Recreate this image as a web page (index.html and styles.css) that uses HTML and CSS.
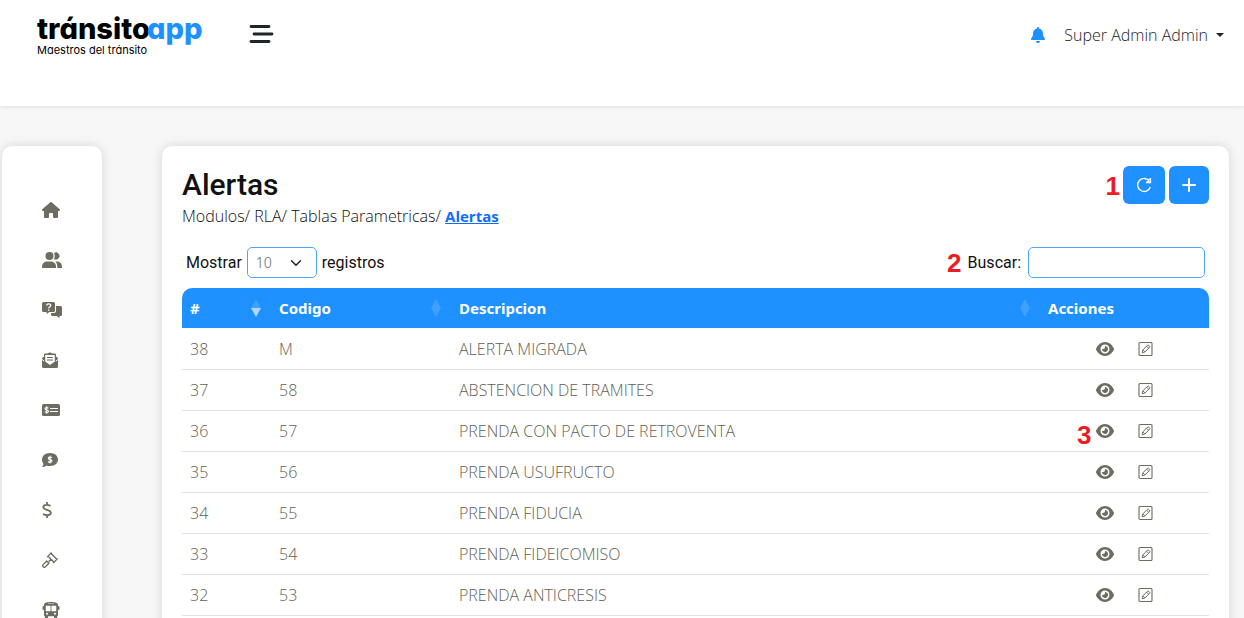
FILE: index.html
```html
<!DOCTYPE html>
<html lang="es">
<head>
<meta charset="utf-8">
<meta name="viewport" content="width=device-width, initial-scale=1">
<title>Alertas - tránsitoapp</title>
<link rel="stylesheet" href="styles.css">
</head>
<body>
<svg class="defs" aria-hidden="true">
  <symbol id="eye" viewBox="0 0 576 512"><path d="M288 32c-80.800 0-145.500 36.800-192.600 80.600C48.600 156 17.300 208 2.500 243.700c-3.300 7.900-3.300 16.700 0 24.600C17.300 304 48.600 356 95.400 399.400C142.500 443.200 207.200 480 288 480s145.500-36.800 192.600-80.600c46.800-43.500 78.100-95.400 93-131.100c3.300-7.900 3.300-16.700 0-24.600c-14.900-35.700-46.200-87.700-93-131.100C433.500 68.800 368.800 32 288 32zM144 256a144 144 0 1 1 288 0 144 144 0 1 1 -288 0zm144-64c0 35.300-28.700 64-64 64c-7.100 0-13.900-1.200-20.300-3.300c-5.500-1.800-11.900 1.600-11.700 7.400c.3 6.900 1.300 13.800 3.200 20.700c13.700 51.200 66.400 81.600 117.600 67.900s81.600-66.400 67.900-117.600c-11.100-41.500-47.800-69.400-88.600-71.100c-5.800-.2-9.200 6.100-7.400 11.700c2.100 6.400 3.300 13.200 3.300 20.300z"/></symbol>
  <symbol id="edit" viewBox="0 0 16 16"><g fill="none" stroke="currentColor"><rect x="1" y="1.500" width="13" height="13" rx="1" stroke-width="1.100"/><path d="M4.200 11.800l.6-2.900 4.600-4.600a1 1 0 0 1 1.400 0l.7.700a1 1 0 0 1 0 1.400l-4.600 4.600zM8.600 5.200l2 2M5.100 9l1.800 1.800"/></g></symbol>
</svg>
<header class="topbar">
  <a class="logo" href="#"><span class="logo-name">tránsito<span class="logo-app">app</span></span><span class="logo-tag">Maestros del tránsito</span></a>
  <button class="menu-btn" aria-label="Menú"><svg width="26" height="22" viewBox="0 0 26 22"><path d="M3 3.500h18M6 11h18M3 18.500h18" stroke="#212529" stroke-width="2.800" stroke-linecap="round"/></svg></button>
  <div class="account">
    <button class="bell" aria-label="Notificaciones"><svg width="14" height="16" viewBox="0 0 448 512"><path fill="#1e90ff" d="M224 0c-17.700 0-32 14.300-32 32V51.200C119 66 64 130.600 64 208v18.800c0 47-17.300 92.400-48.500 127.600l-7.400 8.300c-8.400 9.400-10.400 22.900-5.300 34.400S19.400 416 32 416H416c12.600 0 24-7.400 29.200-18.900s3.100-25-5.300-34.400l-7.400-8.300C401.300 319.200 384 273.900 384 226.800V208c0-77.400-55-142-128-156.800V32c0-17.700-14.300-32-32-32zm45.300 493.300c12-12 18.700-28.300 18.700-45.300H160c0 17 6.700 33.300 18.700 45.300s28.300 18.700 45.300 18.700s33.300-6.700 45.300-18.700z"/></svg></button>
    <button class="user">Super Admin Admin<span class="caret"></span></button>
  </div>
</header>
<div class="layout">
  <nav class="sidebar" aria-label="Principal">
    <a href="#" aria-label="Inicio"><svg width="18" height="16" viewBox="0 0 576 512"><path d="M575.800 255.500c0 18-15 32.100-32 32.100h-32l.7 160.200c0 2.700-.2 5.400-.5 8.100V472c0 22.100-17.900 40-40 40H392c-22.100 0-40-17.900-40-40V384c0-17.700-14.300-32-32-32H256c-17.700 0-32 14.300-32 32v88c0 22.100-17.900 40-40 40H104c-22.100 0-40-17.900-40-40V287.600H32c-18 0-32-14-32-32.100c0-9 3-17 10-24L266.400 8c7-7 15-8 22-8s15 2 21 7L564.800 231.500c8 7 12 15 11 24z"/></svg></a>
    <a href="#" aria-label="Usuarios"><svg width="20" height="16" viewBox="0 0 20 16"><circle cx="7.500" cy="4" r="4"/><path d="M0 16v-1.500C0 11.500 2.500 9.500 5.500 9.500h3c3 0 5.500 2 5.500 5V16z"/><path d="M12 1.100a3.500 3.500 0 1 1 0 5.800c1-1.700 1-4.100 0-5.800zM13.500 9.700c3.500-.5 6.500 1.500 6.500 5V16h-4.700c.2-2.700-.4-4.700-1.800-6.300z"/></svg></a>
    <a href="#" aria-label="Consultas"><svg width="20" height="16" viewBox="0 0 20 16"><path d="M1.500 0h10Q13 0 13 1.500v7Q13 10 11.500 10H7.500L4.500 12V10h-3Q0 10 0 8.500v-7Q0 0 1.500 0z"/><path d="M14 4h4.500Q20 4 20 5.500v7q0 1.500-1.500 1.500H17.500v2L14.500 14H10.500Q9 14 9 12.500V11h3Q14 11 14 9z"/><path d="M4.700 3.500c0-2.200 4-2.200 4 0 0 1.500-2 1.400-2 2.700" fill="none" stroke="#fff" stroke-width="1.300"/><circle cx="6.700" cy="8.100" r=".8" fill="#fff"/></svg></a>
    <a href="#" aria-label="Correspondencia"><svg width="16" height="16" viewBox="0 0 16 16"><path d="M0 6l2-1.500V2.500Q2 1.500 3 1.500h2.700Q8-.7 10.300 1.500H13q1 0 1 1v2L16 6v8.500q0 1.500-1.500 1.500h-13Q0 16 0 14.500z"/><path d="M3.200 3h9.600v6.500L8 13 3.200 9.500z" fill="#fff"/><path d="M5 5.500h6M5 8h6" stroke="currentColor"/><path d="M0 7.500l2.200 1.600M16 7.500l-2.200 1.600" stroke="#fff"/></svg></a>
    <a href="#" aria-label="Cobros"><svg width="18" height="16" viewBox="0 0 18 16"><rect y="2" width="18" height="12" rx="1.500"/><path d="M8 6.500h8M8 9.500h8M6.400 6.300C5.500 5.200 3 5.300 3 6.700c0 1.600 3.500.9 3.500 2.600C6.500 10.800 3.800 10.900 2.800 9.600M4.700 4.200v7.600" fill="none" stroke="#fff" stroke-width="1.100"/></svg></a>
    <a href="#" aria-label="Comentarios de pago"><svg width="16" height="16" viewBox="0 0 16 16"><path d="M8 1c4.500 0 8 2.800 8 6.500S12.500 14 8 14c-1.300 0-2.500-.2-3.500-.6C3.200 14.400 1.500 15 0 15c1-1 1.500-2.200 1.500-3.200C.6 10.700 0 9.200 0 7.500 0 3.800 3.500 1 8 1z"/><path d="M9.800 5.800C9 4.700 6.300 4.700 6.300 6.200c0 1.800 3.700 1 3.700 2.800 0 1.600-3 1.600-4 .3M8.100 3.700v7.800" fill="none" stroke="#fff" stroke-width="1.200"/></svg></a>
    <a href="#" aria-label="Pagos"><svg width="10" height="16" viewBox="0 0 10 16"><path d="M8.500 4C6.500 2.500 1.300 2 1.300 5.200 1.300 8.500 8.900 7.200 8.900 10.800 8.900 14 3.500 13.700 1 12M5 0v2.800M5 13.200V16" fill="none" stroke="currentColor" stroke-width="1.800"/></svg></a>
    <a href="#" aria-label="Procesos"><svg width="16" height="16" viewBox="0 0 16 16"><g fill="none" stroke="currentColor" stroke-width="1.300" stroke-linejoin="round"><path d="M9.300.8 5.500 4.600l1.300.4 4.500 4.500.2 1.200 3.800-3.800-1.200-.4-4.500-4.500zM9 7.300 6.600 9.700"/><path d="M4.700 9l2.200 2.200-3.500 3.600a1.500 1.500 0 0 1-2.200-2.200z"/></g></svg></a>
    <a href="#" aria-label="Transporte"><svg width="18" height="16" viewBox="0 0 18 16"><path d="M9 0c4 0 7 .8 7 3v1h.5q1 0 1 1v2q0 1-1 1H16v5q0 1-.8 1.200V16H12v-1.700H6V16H2.800v-1.800Q2 14 2 13V8h-.5q-1 0-1-1V5q0-1 1-1H2V3c0-2.200 3-3 7-3z"/><path d="M4 4h4.300v5H4zM9.700 4H14v5H9.700zM6 1.600h6" fill="#fff" stroke="#fff" stroke-width=".5"/><circle cx="5" cy="11.700" r="1" fill="#fff"/><circle cx="13" cy="11.700" r="1" fill="#fff"/></svg></a>
  </nav>
  <main class="card">
    <div class="card-head">
      <div>
        <h1>Alertas</h1>
        <p class="crumbs">Modulos/ RLA/ Tablas Parametricas/ <a href="#">Alertas</a></p>
      </div>
      <div class="actions">
        <span class="mark mark-actions">1</span>
        <button class="btn" aria-label="Recargar"><svg width="18" height="18" viewBox="0 0 18 18"><path d="M14.500 5.300A6.500 6.500 0 1 0 15.300 11M15.500 2v4.500H11M12 5.800l3-3" fill="none" stroke="#fff" stroke-width="1.300"/></svg></button>
        <button class="btn" aria-label="Agregar"><svg width="16" height="18" viewBox="0 0 16 18"><path d="M8 3v12M2 9h12" stroke="#fff" stroke-width="2" stroke-linecap="round"/></svg></button>
      </div>
    </div>
    <div class="filters">
      <label>Mostrar <select class="field"><option>10</option><option>25</option><option>50</option></select> registros</label>
      <label class="search"><span class="mark mark-search">2</span>Buscar: <input class="field" type="search"></label>
    </div>
    <table>
      <colgroup><col class="c-id"><col class="c-code"><col><col class="c-act"></colgroup>
      <thead><tr>
        <th><div class="th">#<span class="sort desc"></span></div></th>
        <th><div class="th">Codigo<span class="sort"></span></div></th>
        <th><div class="th">Descripcion<span class="sort"></span></div></th>
        <th>Acciones</th>
      </tr></thead>
      <tbody>
        <tr><td>38</td><td>M</td><td>ALERTA MIGRADA</td><td><div class="row-act"><button aria-label="Ver"><svg width="18" height="16"><use href="#eye"/></svg></button><button aria-label="Editar"><svg width="16" height="16"><use href="#edit"/></svg></button></div></td></tr>
        <tr><td>37</td><td>58</td><td>ABSTENCION DE TRAMITES</td><td><div class="row-act"><button aria-label="Ver"><svg width="18" height="16"><use href="#eye"/></svg></button><button aria-label="Editar"><svg width="16" height="16"><use href="#edit"/></svg></button></div></td></tr>
        <tr><td>36</td><td>57</td><td>PRENDA CON PACTO DE RETROVENTA</td><td><div class="row-act"><span class="mark mark-row">3</span><button aria-label="Ver"><svg width="18" height="16"><use href="#eye"/></svg></button><button aria-label="Editar"><svg width="16" height="16"><use href="#edit"/></svg></button></div></td></tr>
        <tr><td>35</td><td>56</td><td>PRENDA USUFRUCTO</td><td><div class="row-act"><button aria-label="Ver"><svg width="18" height="16"><use href="#eye"/></svg></button><button aria-label="Editar"><svg width="16" height="16"><use href="#edit"/></svg></button></div></td></tr>
        <tr><td>34</td><td>55</td><td>PRENDA FIDUCIA</td><td><div class="row-act"><button aria-label="Ver"><svg width="18" height="16"><use href="#eye"/></svg></button><button aria-label="Editar"><svg width="16" height="16"><use href="#edit"/></svg></button></div></td></tr>
        <tr><td>33</td><td>54</td><td>PRENDA FIDEICOMISO</td><td><div class="row-act"><button aria-label="Ver"><svg width="18" height="16"><use href="#eye"/></svg></button><button aria-label="Editar"><svg width="16" height="16"><use href="#edit"/></svg></button></div></td></tr>
        <tr><td>32</td><td>53</td><td>PRENDA ANTICRESIS</td><td><div class="row-act"><button aria-label="Ver"><svg width="18" height="16"><use href="#eye"/></svg></button><button aria-label="Editar"><svg width="16" height="16"><use href="#edit"/></svg></button></div></td></tr>
      </tbody>
    </table>
  </main>
</div>
</body>
</html>
```
FILE: styles.css
```css
* { box-sizing: border-box; }
body {
  margin: 0;
  height: 100vh;
  overflow: hidden;
  background: #f7f7f7;
  color: #212529;
  font: 300 16px/24px "Open Sans", "Noto Sans", sans-serif;
}
button {
  border: 0;
  padding: 0;
  background: none;
  color: inherit;
  font: inherit;
  cursor: pointer;
}
svg { display: block; fill: currentColor; }
.defs { position: absolute; width: 0; height: 0; }

.topbar {
  display: flex;
  align-items: flex-start;
  padding: 14px 20px 0 37px;
  height: 106px;
  background: #fff;
  box-shadow: 0 0 5px rgba(0, 0, 0, .15);
}
.logo {
  display: flex;
  flex-direction: column;
  width: 211px;
  color: #000;
  font-family: Inter, sans-serif;
  font-feature-settings: "cv11";
  text-decoration: none;
}
.logo-name { font-size: 29px; line-height: 30px; font-weight: 800; }
.logo-app { margin-left: -3px; color: #1e90ff; }
.logo-tag { font-size: 11px; line-height: 12px; font-weight: 400; }
.menu-btn { margin-top: 9px; }
.account { display: flex; gap: 19px; margin-left: auto; margin-top: 9px; align-items: center; }
.user { display: flex; align-items: center; gap: 8px; }
.caret {
  border: 4px solid transparent;
  border-top-color: currentColor;
  border-bottom: 0;
}

.layout {
  display: flex;
  align-items: stretch;
  gap: 60px;
  padding: 40px 15px 0 2px;
  min-height: calc(100vh - 106px);
}
.sidebar, .card {
  background: #fff;
  border-radius: 10px 10px 0 0;
  box-shadow: 0 0 12px rgba(0, 0, 0, .14);
}
.sidebar { flex: 0 0 100px; padding: 39px 0 0 40px; color: #6c6c60; }
.sidebar a { display: flex; align-items: center; height: 50px; color: inherit; }
.card { flex: 1; min-width: 0; padding: 20px; color: #111; }
.card-head { display: flex; justify-content: space-between; align-items: flex-start; }
h1 { margin: 0; font: 500 30px/38px Roboto, sans-serif; color: #111; }
.crumbs { margin: 0; }
.crumbs a { color: #0d6efd; font-size: 15px; font-weight: 700; }
.actions { position: relative; display: flex; gap: 4px; }
.btn { padding: 10px 12px; border-radius: 6px; background: #1e90ff; }

.filters {
  display: flex;
  justify-content: space-between;
  padding: 19px 4px 10px;
  font: 400 16px/24px Roboto, sans-serif;
}
.filters label { display: flex; align-items: center; gap: 5px; }
.filters .search { position: relative; gap: 7px; }
.field {
  height: 31px;
  border: 1px solid #4ba6ff;
  border-radius: 5px;
  background-color: #fff;
  color: #666;
  font: 300 14px/21px "Noto Sans", sans-serif;
}
select.field {
  appearance: none;
  width: 70px;
  padding: 4px 8px;
  background: url("data:image/svg+xml,%3Csvg xmlns='http://www.w3.org/2000/svg' viewBox='0 0 16 16'%3E%3Cpath fill='none' stroke='%23212529' stroke-width='2' stroke-linecap='round' stroke-linejoin='round' d='M2 5l6 6 6-6'/%3E%3C/svg%3E") no-repeat right 14px center / 12px 12px;
}
input.field { width: 177px; padding: 4px 8px; }

table { width: 100%; border-collapse: separate; border-spacing: 0; table-layout: fixed; }
.c-id { width: 89px; }
.c-code { width: 180px; }
.c-act { width: 169px; }
th {
  padding: 8px;
  background: #1e90ff;
  color: #fff;
  font-family: "Noto Sans", sans-serif;
  font-size: 15px;
  font-weight: 700;
  text-align: left;
}
th:first-child { border-top-left-radius: 10px; }
th:last-child { border-top-right-radius: 10px; }
.th { display: flex; align-items: center; justify-content: space-between; }
.sort { display: flex; flex-direction: column; margin-right: 2px; }
.sort::before, .sort::after { content: ""; border: 5px solid transparent; opacity: .2; }
.sort::before { border-top: 0; border-bottom: 9px solid #bfdfff; }
.sort::after { border-bottom: 0; border-top: 9px solid #bfdfff; }
.sort.desc::after { opacity: .9; }
td { padding: 8px; border-bottom: 1px solid #dee2e6; color: #5f5f55; }
tbody tr:first-child td { padding-top: 9px; }
.row-act { position: relative; display: flex; align-items: center; gap: 24px; height: 24px; padding-left: 48px; color: #6c6c60; }

.mark {
  position: absolute;
  color: #ed1c24;
  font: 700 26px/26px "Liberation Sans", Arial, sans-serif;
}
.mark-actions { right: 100%; top: 7px; margin-right: 3px; }
.mark-search { right: 100%; top: 3px; margin-right: 6px; }
.mark-row { left: 29px; top: 3px; }
```
